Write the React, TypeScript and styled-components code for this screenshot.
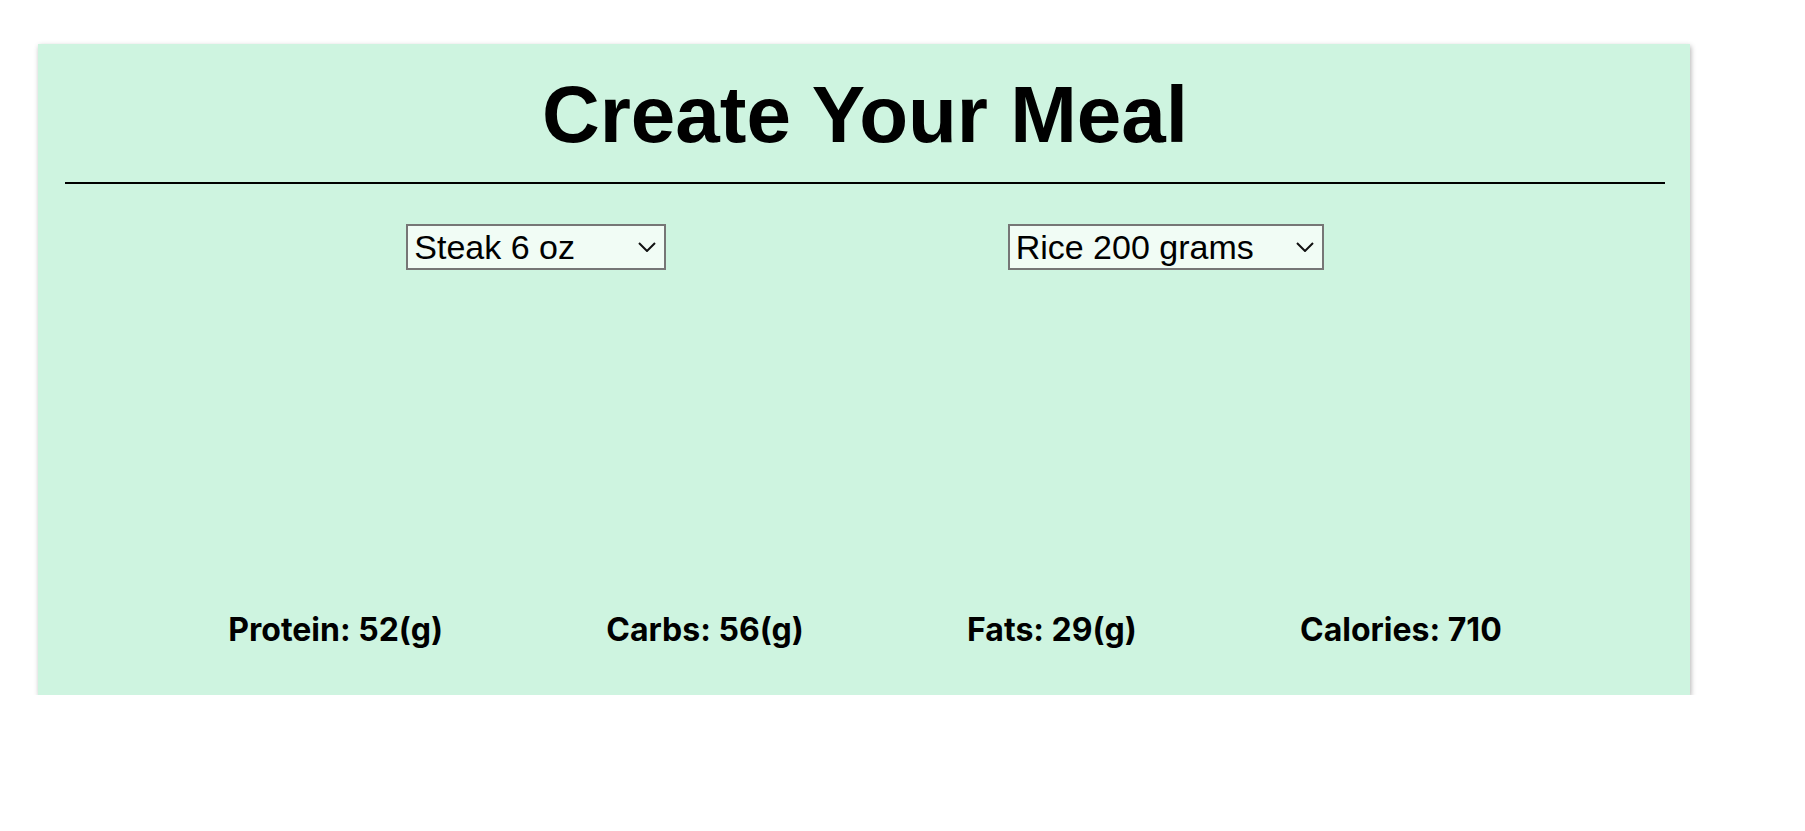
import React, { useState } from "react";
import styled, { createGlobalStyle } from "styled-components";

const GlobalStyle = createGlobalStyle`
  html, body {
    margin: 0;
    padding: 0;
    background: #ffffff;
  }
  body {
    font-family: "Liberation Sans", Arial, sans-serif;
  }
`;

const Page = styled.div`
  padding: 44px 0 0 38px;
`;

const Card = styled.section`
  width: 1652px;
  box-sizing: border-box;
  background: #cef4e0;
  box-shadow: 1px 2px 5px rgba(0, 0, 0, 0.3);
  padding: 26px 25px 46px 27px;
  display: flex;
  flex-direction: column;
`;

const Title = styled.h1`
  margin: 0;
  font-family: "Liberation Sans", Arial, sans-serif;
  font-weight: 700;
  font-size: 80px;
  line-height: 90px;
  text-align: center;
  color: #000;
`;

const Divider = styled.div`
  margin-top: 22px;
  height: 2px;
  background: #000;
`;

const SelectRow = styled.div`
  margin-top: 40px;
  height: 387px;
  display: flex;
  justify-content: space-evenly;
  align-items: flex-start;
`;

const SelectWrap = styled.div`
  position: relative;
  display: inline-flex;
`;

const FoodSelect = styled.select<{ $w: number }>`
  appearance: none;
  -webkit-appearance: none;
  width: ${(p) => p.$w}px;
  height: 46px;
  box-sizing: border-box;
  margin: 0;
  padding: 0 34px 0 6px;
  border: 2px solid #767676;
  border-radius: 0;
  background: #f1fcf5;
  color: #000;
  font-family: "Liberation Sans", Arial, sans-serif;
  font-size: 34px;
  line-height: 42px;
  outline: none;
`;

const Chevron = styled.svg`
  position: absolute;
  right: 10px;
  top: 18px;
  width: 18px;
  height: 10px;
  pointer-events: none;
`;

const Totals = styled.div`
  display: flex;
  justify-content: space-evenly;
  align-items: baseline;
`;

const Stat = styled.span`
  font-family: Inter, "Noto Sans", sans-serif;
  font-weight: 700;
  font-size: 32px;
  line-height: 38px;
  color: #000;
`;

const proteins = ["Steak 6 oz", "Chicken 6 oz", "Salmon 6 oz"];
const carbs = ["Rice 200 grams", "Pasta 200 grams", "Potato 200 grams"];

function Dropdown({
  options,
  value,
  onChange,
  width,
}: {
  options: string[];
  value: string;
  onChange: (v: string) => void;
  width: number;
}) {
  return (
    <SelectWrap>
      <FoodSelect $w={width} value={value} onChange={(e) => onChange(e.target.value)}>
        {options.map((o) => (
          <option key={o} value={o}>
            {o}
          </option>
        ))}
      </FoodSelect>
      <Chevron viewBox="0 0 18 10">
        <polyline points="1,1 9,9 17,1" fill="none" stroke="#111" strokeWidth="2" />
      </Chevron>
    </SelectWrap>
  );
}

export default function App() {
  const [protein, setProtein] = useState(proteins[0]);
  const [carb, setCarb] = useState(carbs[0]);

  return (
    <>
      <GlobalStyle />
      <Page>
        <Card>
          <Title>Create Your Meal</Title>
          <Divider />
          <SelectRow>
            <Dropdown options={proteins} value={protein} onChange={setProtein} width={260} />
            <Dropdown options={carbs} value={carb} onChange={setCarb} width={316} />
          </SelectRow>
          <Totals>
            <Stat>Protein: 52(g)</Stat>
            <Stat>Carbs: 56(g)</Stat>
            <Stat>Fats: 29(g)</Stat>
            <Stat>Calories: 710</Stat>
          </Totals>
        </Card>
      </Page>
    </>
  );
}
